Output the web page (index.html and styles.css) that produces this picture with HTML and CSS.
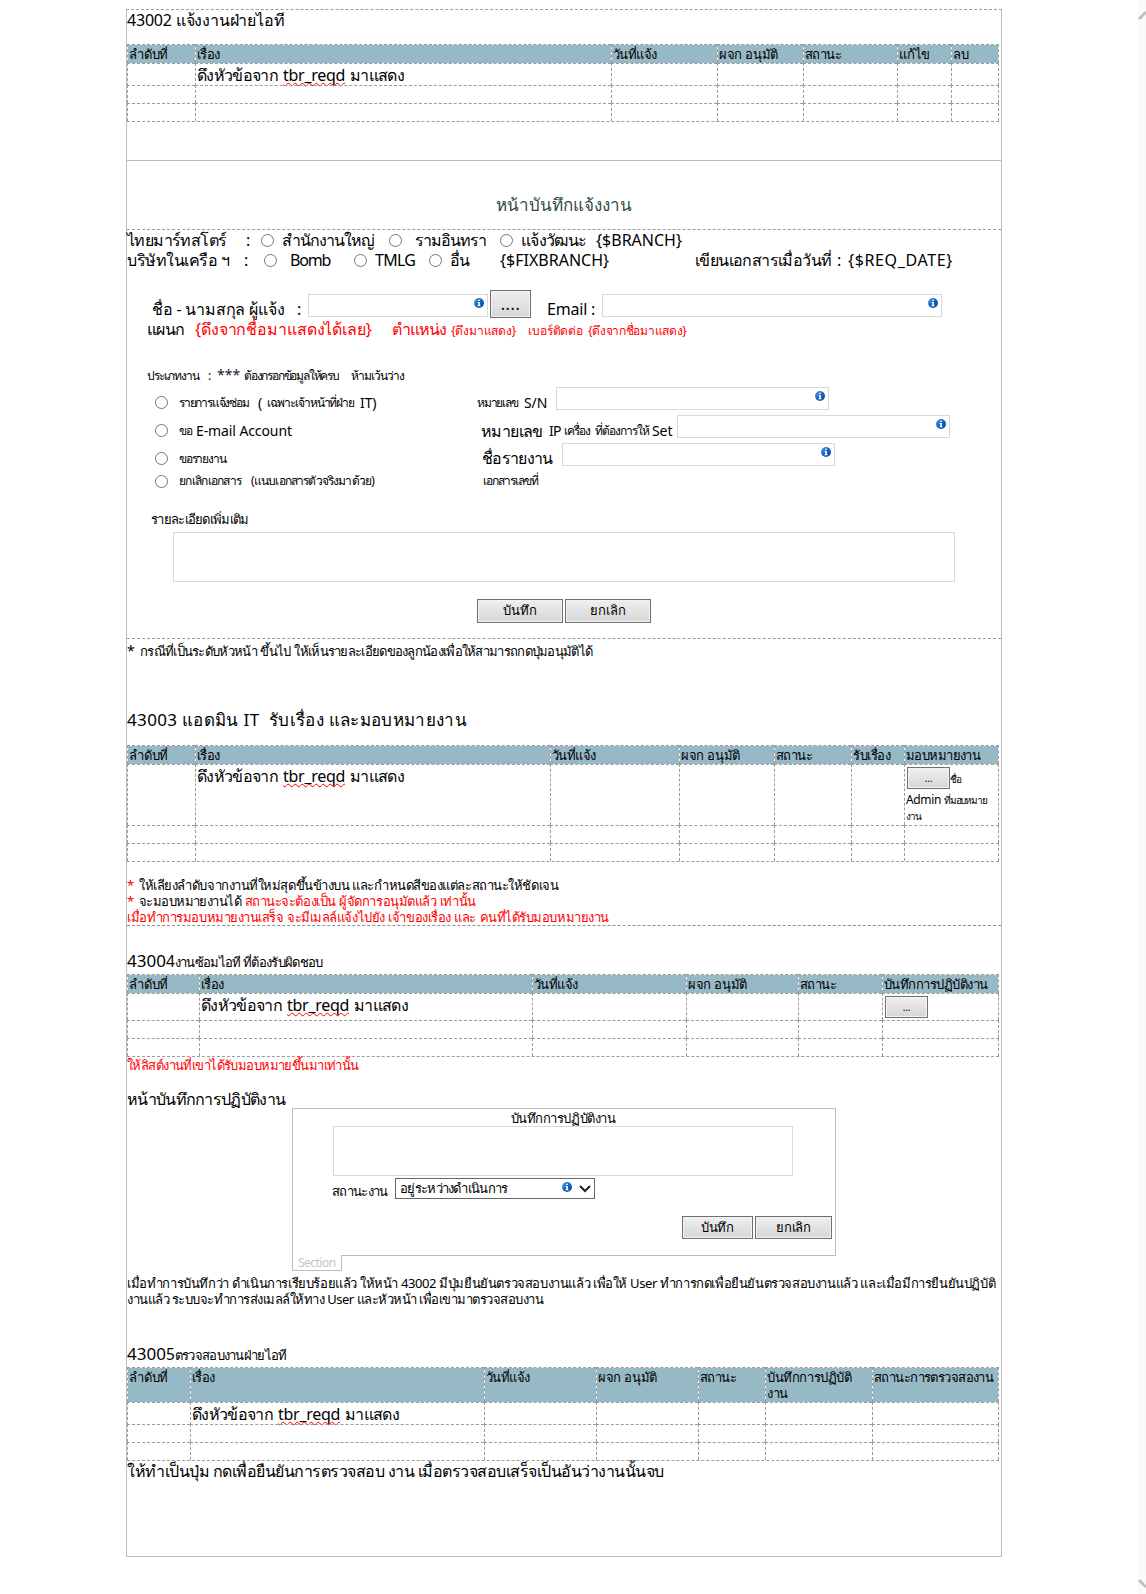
FILE: index.html
```
<!DOCTYPE html>
<html lang="th">
<head>
<meta charset="utf-8">
<title>43002 แจ้งงานฝ่ายไอที</title>
<link rel="stylesheet" href="styles.css">
</head>
<body>
<svg class="defs" width="0" height="0" aria-hidden="true">
  <defs>
    <linearGradient id="info-blue" x1="0" y1="0" x2="1" y2="1">
      <stop offset="0" stop-color="#5aa7ee"/>
      <stop offset="0.45" stop-color="#1668c8"/>
      <stop offset="1" stop-color="#0a3f94"/>
    </linearGradient>
    <symbol id="info" viewBox="0 0 10 10">
      <circle cx="5" cy="5" r="5" fill="url(#info-blue)"/>
      <path d="M4.2 1.7h1.7v1.4H4.2zM3.6 4h2.3v3.2h.7v1H3.5v-1h.8V5h-.7z" fill="#fff"/>
    </symbol>
  </defs>
</svg>
<div class="page">
<main class="sheet">

  <section class="list">
    <h2 class="title t16 k2">43002 แจ้งงานฝ่ายไอที</h2>
    <div class="table cols-request">
      <div class="row head"><span class="k2">ลำดับที่</span><span>เรื่อง</span><span>วันที่แจ้ง</span><span class="k3">ผจก อนุมัติ</span><span>สถานะ</span><span class="k2">แก้ไข</span><span class="k0">ลบ</span></div>
      <div class="row first"><span></span><span class="topic">ดึงหัวข้อจาก <u>tbr_reqd</u> มาแสดง</span><span></span><span></span><span></span><span></span><span></span></div>
      <div class="row"><span></span><span></span><span></span><span></span><span></span><span></span><span></span></div>
      <div class="row"><span></span><span></span><span></span><span></span><span></span><span></span><span></span></div>
    </div>
  </section>

  <section class="form">
    <h1 class="form-title">หน้าบันทึกแจ้งงาน</h1>
    <div class="line l-branch t16">
      <span>ไทยมาร์ทสโตร์</span><span>:</span><i class="radio"></i><span class="k10">สำนักงานใหญ่</span><i class="radio"></i><span class="k10">รามอินทรา</span><i class="radio"></i><span class="k7">แจ้งวัฒนะ</span><span class="k0">{$BRANCH}</span>
    </div>
    <div class="line l-company t16">
      <span class="k5">บริษัทในเครือ ฯ</span><span>:</span><i class="radio"></i><span class="k12">Bomb</span><i class="radio"></i><span class="k7">TMLG</span><i class="radio"></i><span>อื่น</span><span class="k0">{$FIXBRANCH}</span><span>เขียนเอกสารเมื่อวันที่</span><span>:</span><span class="w6">{$REQ_DATE}</span>
    </div>
    <div class="line l-name t16">
      <span class="k2">ชื่อ - นามสกุล ผู้แจ้ง</span><span>:</span><div class="field"><svg class="info"><use href="#info"/></svg></div><button class="btn dots">....</button><span class="k2">Email :</span><div class="field"><svg class="info"><use href="#info"/></svg></div>
    </div>
    <div class="line l-dept t16">
      <span class="k7">แผนก</span><span class="red k1">{ดึงจากชื่อมาแสดงได้เลย}</span><span class="red k10">ตำแหน่ง</span><span class="red t12 k2">{ดึงมาแสดง}</span><span class="red t12 k1">เบอร์ติดต่อ</span><span class="red t12 k3">{ดึงจากชื่อมาแสดง}</span>
    </div>
    <div class="line l-type narrow">
      <span>ประเภทงาน</span><span>:</span><span class="stars">***</span><span class="k12">ต้องกรอกข้อมูลให้ครบ</span><span>ห้ามเว้นว่าง</span>
    </div>
    <div class="line l-repair narrow">
      <i class="radio"></i><span class="k12">รายการแจ้งซ่อม</span><span class="t14">(</span><span>เฉพาะเจ้าหน้าที่ฝ่าย</span><span class="t14">IT)</span><span class="k12">หมายเลข</span><span class="t14">S/N</span><div class="field"><svg class="info"><use href="#info"/></svg></div>
    </div>
    <div class="line l-email narrow">
      <i class="radio"></i><span>ขอ</span><span class="t14">E-mail Account</span><span class="t16">หมายเลข</span><span class="t14 k7">IP</span><span>เครื่อง</span><span>ที่ต้องการให้</span><span class="t14">Set</span><div class="field"><svg class="info"><use href="#info"/></svg></div>
    </div>
    <div class="line l-report narrow">
      <i class="radio"></i><span class="k12">ขอรายงาน</span><span class="t16 k7">ชื่อรายงาน</span><div class="field"><svg class="info"><use href="#info"/></svg></div>
    </div>
    <div class="line l-cancel narrow">
      <i class="radio"></i><span class="k7">ยกเลิกเอกสาร</span><span class="k8">(แนบเอกสารตัวจริงมาด้วย)</span><span>เอกสารเลขที่</span>
    </div>
    <div class="detail-label t13 k7">รายละเอียดเพิ่มเติม</div>
    <div class="area detail"></div>
    <div class="actions">
      <button class="btn">บันทึก</button><button class="btn">ยกเลิก</button>
    </div>
  </section>

  <section class="assign">
    <p class="hint t13"><span class="t14">*</span><span class="k7">กรณีที่เป็นระดับหัวหน้า ขึ้นไป ให้เห็นรายละเอียดของลูกน้องเพื่อให้สามารถกดปุ่มอนุมัติได้</span></p>
    <h2 class="title big">43003 แอดมิน IT&nbsp; รับเรื่อง และมอบหมายงาน</h2>
    <div class="table cols-assign">
      <div class="row head"><span class="k2">ลำดับที่</span><span>เรื่อง</span><span>วันที่แจ้ง</span><span class="k3">ผจก อนุมัติ</span><span>สถานะ</span><span class="k4">รับเรื่อง</span><span class="k6">มอบหมายงาน</span></div>
      <div class="row first"><span></span><span class="topic">ดึงหัวข้อจาก <u>tbr_reqd</u> มาแสดง</span><span></span><span></span><span></span><span></span><span class="assignee"><button class="btn more">...</button><small>ชื่อ</small><br><b>Admin</b> <small>ที่มอบหมาย</small><br><small>งาน</small></span></div>
      <div class="row"><span></span><span></span><span></span><span></span><span></span><span></span><span></span></div>
      <div class="row"><span></span><span></span><span></span><span></span><span></span><span></span><span></span></div>
    </div>
    <div class="notes t13">
      <p><span class="red star">*</span>ให้เลียงลำดับจากงานที่ใหม่สุดขึ้นข้างบน และกำหนดสีของแต่ละสถานะให้ชัดเจน</p>
      <p><span class="red star">*</span><span class="k6">จะมอบหมายงานได้</span> <span class="red">สถานะจะต้องเป็น ผู้จัดการอนุมัตแล้ว เท่านั้น</span></p>
      <p class="red">เมื่อทำการมอบหมายงานเสร็จ จะมีเมลล์แจ้งไปยัง เจ้าของเรื่อง และ คนที่ได้รับมอบหมายงาน</p>
    </div>
  </section>

  <section class="work">
    <h2 class="title mixed"><span class="t17">4300</span><span class="t15">4</span><span class="t13 k7">งานซ้อมไอที ที่ต้องรับผิดชอบ</span></h2>
    <div class="table cols-work">
      <div class="row head"><span class="k2">ลำดับที่</span><span>เรื่อง</span><span>วันที่แจ้ง</span><span class="k3">ผจก อนุมัติ</span><span>สถานะ</span><span>บันทึกการปฏิบัติงาน</span></div>
      <div class="row first"><span></span><span class="topic">ดึงหัวข้อจาก <u>tbr_reqd</u> มาแสดง</span><span></span><span></span><span></span><span class="assignee"><button class="btn more">...</button></span></div>
      <div class="row"><span></span><span></span><span></span><span></span><span></span><span></span></div>
      <div class="row"><span></span><span></span><span></span><span></span><span></span><span></span></div>
    </div>
    <p class="only red t13 k6">ให้ลิสต์งานที่เขาได้รับมอบหมายขึ้นมาเท่านั้น</p>
    <h3 class="subtitle t16 k7">หน้าบันทึกการปฏิบัติงาน</h3>
    <div class="panel">
      <div class="panel-title t13">บันทึกการปฏิบัติงาน</div>
      <div class="area log"></div>
      <div class="status t13"><span class="status-label k7">สถานะงาน</span><div class="select"><span class="k7">อยู่ระหว่างดำเนินการ</span><svg class="info"><use href="#info"/></svg><svg class="chevron" viewBox="0 0 12 8"><path d="M1 1l5 5 5-5" fill="none" stroke="#222" stroke-width="2"/></svg></div></div>
      <div class="actions"><button class="btn save">บันทึก</button><button class="btn cancel">ยกเลิก</button></div>
      <div class="tab">Section</div>
    </div>
    <p class="after t13"><span class="k4">เมื่อทำการบันทึกว่า ดำเนินการเรียบร้อยแล้ว ให้หน้า 43002 มีปุ่มยืนยันตรวจสอบงานแล้ว เพื่อให้ User ทำการกดเพื่อยืนยันตรวจสอบงานแล้ว และเมื่อมีการยืนยันปฏิบัติ</span><br><span class="k5">งานแล้ว ระบบจะทำการส่งเมลล์ให้ทาง User และหัวหน้า เพื่อเขามาตรวจสอบงาน</span></p>
  </section>

  <section class="check">
    <h2 class="title mixed"><span class="t17">4300</span><span class="t15">5</span><span class="t13 k7">ตรวจสอบงานฝ่ายไอที</span></h2>
    <div class="table cols-check">
      <div class="row head"><span class="k2">ลำดับที่</span><span>เรื่อง</span><span>วันที่แจ้ง</span><span class="k3">ผจก อนุมัติ</span><span>สถานะ</span><span class="k4">บันทึกการปฏิบัติ<br>งาน</span><span class="k6">สถานะการตรวจสองาน</span></div>
      <div class="row first"><span></span><span class="topic">ดึงหัวข้อจาก <u>tbr_reqd</u> มาแสดง</span><span></span><span></span><span></span><span></span><span></span></div>
      <div class="row"><span></span><span></span><span></span><span></span><span></span><span></span><span></span></div>
      <div class="row"><span></span><span></span><span></span><span></span><span></span><span></span><span></span></div>
    </div>
    <p class="final t16 k5">ให้ทำเป็นปุ่ม กดเพื่อยืนยันการตรวจสอบ งาน เมื่อตรวจสอบเสร็จเป็นอันว่างานนั้นจบ</p>
  </section>
</main>
<aside class="scrollbar">
  <svg width="8" height="12" viewBox="0 0 8 12"><path d="M1 9l7-7" stroke="#c0c0c0" stroke-width="3"/></svg>
  <svg width="8" height="12" viewBox="0 0 8 12"><path d="M1 2l7 7" stroke="#c0c0c0" stroke-width="3"/></svg>
</aside>
</div>
</body>
</html>
```
FILE: styles.css
```
* { box-sizing: border-box; }
body { margin: 0; background: #fff; color: #000; font-family: "Noto Sans", sans-serif; overflow: hidden; }
h1, h2, h3, p { margin: 0; font-weight: normal; }
.defs { display: block; }
.page { display: flex; justify-content: space-between; height: 1594px; }

.sheet { margin: 9px 0 0 126px; width: 876px; height: 1548px; border: 1px solid #bdbdbd; border-top: 1px dashed #9c9c9c; white-space: nowrap; }
.scrollbar { width: 8px; background: #f9f9f9; display: flex; flex-direction: column; justify-content: space-between; padding: 10px 0 4px; }

/* type sizes and tracking */
.t12 { font-size: 12px; }
.t13 { font-size: 13px; letter-spacing: -.45px; }
.t14 { font-size: 14px; letter-spacing: -.1px; }
.t15 { font-size: 15.5px; letter-spacing: 0; }
.t16 { font-size: 16px; letter-spacing: -.6px; }
.t17 { font-size: 17px; letter-spacing: 0; }
.narrow { font-size: 12px; letter-spacing: -1.05px; }
.k0 { letter-spacing: 0; }
.k1 { letter-spacing: -.12px; }
.k2 { letter-spacing: -.2px; }
.k3 { letter-spacing: -.3px; }
.k4 { letter-spacing: -.4px; }
.k5 { letter-spacing: -.5px; }
.k6 { letter-spacing: -.57px; }
.k7 { letter-spacing: -.7px; }
.k8 { letter-spacing: -.82px; }
.k10 { letter-spacing: -1px; }
.k12 { letter-spacing: -1.2px; }
.w6 { letter-spacing: .63px; }
.red { color: #f00; }

/* tables */
.title { height: 22px; line-height: 22px; }
.list .title { height: 21px; line-height: 20px; margin-bottom: 13px; }
.table { width: 872px; border-bottom: 1px dashed #9c9c9c; }
.row { display: grid; height: 18px; }
.row > span { border-left: 1px dashed #9c9c9c; border-top: 1px dashed #9c9c9c; padding-left: 1px; }
.row > span:last-child { border-right: 1px dashed #9c9c9c; }
.head { height: 19px; font-size: 13px; line-height: 18px; letter-spacing: -.52px; }
.head > span { background: #97b9c6; background-clip: padding-box; }
.first { height: 22px; }
.topic { font-size: 16px; line-height: 22px; letter-spacing: -.67px; word-spacing: 1.6px; }
.topic u { letter-spacing: -.29px; text-decoration: underline wavy #f00 1px; text-underline-offset: 1px; text-decoration-skip-ink: none; }
.cols-request .row { grid-template-columns: 68px 416px 106px 86px 94px 54px 48px; }
.cols-assign .row { grid-template-columns: 68px 355px 129px 95px 77px 53px 95px; }
.cols-work .row { grid-template-columns: 72px 333px 154px 112px 84px 117px; }
.cols-check .row { grid-template-columns: 63px 294px 112px 102px 67px 107px 127px; }
.cols-assign .first { height: 61px; }
.cols-work .first { height: 27px; }
.cols-check .head { height: 35px; line-height: 16px; }
.cols-check .head > span { padding-top: 1px; }

/* controls */
.btn { height: 24px; padding: 0 0 1px; border: 1px solid #707070; border-radius: 0; background: linear-gradient(#efefef, #d6d6d6); box-shadow: inset 0 0 0 1px #f3f3f3; font: 13px "Noto Sans", sans-serif; letter-spacing: -.2px; color: #000; width: 86px; }
.btn.more { width: 43px; height: 22px; font-size: 10px; vertical-align: top; padding: 0; }
.btn.dots { width: 41px; height: 28px; font-size: 16px; letter-spacing: .6px; }
.field { height: 23px; border: 1px solid #d9d9d9; padding: 3px 3px; display: flex; justify-content: flex-end; }
.area { border: 1px solid #d9d9d9; height: 50px; }
.info { width: 10px; height: 10px; display: block; }
.radio { width: 13px; height: 13px; border: 1px solid #757575; border-radius: 50%; background: #fff; align-self: center; }

/* request form */
.form { margin-top: 38px; border-top: 1px solid #bdbdbd; border-bottom: 1px dashed #999; }
.form-title { height: 69px; padding-top: 33px; line-height: 22px; text-align: center; font-size: 17px; color: #2f4a44; border-bottom: 1px dashed #9c9c9c; }
.line { display: grid; height: 20px; line-height: 20px; align-items: baseline; }
.l-branch { grid-template-columns: 119px 15px 21px 107px 26px 85px 21px 75px auto; }
.l-company { grid-template-columns: 117px 20px 26px 64px 21px 54px 21px 50px 195px 142px 11px auto; }
.l-name { margin-top: 20px; height: 28px; padding-left: 25px; grid-template-columns: 145px 11px 182px 57px 55px 340px; align-items: start; }
.l-name > span { line-height: 38px; }
.l-name .field { margin-top: 4px; }
.l-name .field:nth-child(3) { width: 180px; }
.l-dept { margin-top: 1px; height: 21px; padding-left: 20px; grid-template-columns: 48px 197px 59px 77px 60px auto; }
.l-type { margin-top: 25px; height: 21px; padding-left: 20px; grid-template-columns: 61px 9px 27px 107px auto; }
.stars { font-size: 14px; letter-spacing: 0; color: #123; }
.l-repair, .l-email, .l-report, .l-cancel { padding-left: 28px; }
.l-repair, .l-email, .l-report { height: 24px; line-height: 31px; margin-top: 4px; align-items: start; }
.l-repair > .radio, .l-email > .radio, .l-report > .radio { align-self: start; margin-top: 9px; }
.l-repair { margin-top: 1px; grid-template-columns: 24px 79px 9px 93px 117px 47px 32px 273px; }
.l-email { grid-template-columns: 24px 17px 285px 68px 15px 31px 57px 25px 273px; }
.l-repair > span, .l-email > span { line-height: 32px; }
.l-report { grid-template-columns: 24px 303px 80px 273px; }
.l-cancel { margin-top: 4px; grid-template-columns: 24px 72px 232px auto; }
.detail-label { margin-top: 18px; height: 21px; line-height: 20px; padding-left: 24px; }
.detail { margin: 2px 0 0 46px; width: 782px; }
.actions { display: flex; gap: 2px; }
.form .actions { margin: 17px 0 15px 350px; }

/* assignment */
.hint { height: 24px; line-height: 24px; display: grid; grid-template-columns: 13px auto; align-items: baseline; word-spacing: 1px; }
.big { margin: 46px 0 14px; font-size: 17px; letter-spacing: .34px; }
.assignee { font-size: 12px; letter-spacing: -.36px; line-height: 16px; padding-top: 2px; }
.assignee .btn { margin-left: 1px; }
.assignee small { font-size: 10px; letter-spacing: -1.1px; display: inline-block; }
.assignee .btn + small { line-height: 25px; padding-bottom: 0; }
.assignee b { font-weight: normal; }
.notes { margin-top: 15px; height: 49px; line-height: 16px; border-bottom: 1px dashed #8f8f8f; }
.star { display: inline-block; width: 12px; font-size: 13px; line-height: 14px; }
.notes p:not(:first-child) { word-spacing: .6px; }

/* work log */
.mixed { margin: 21px 0 5px; }
.only { height: 18px; line-height: 17px; }
.subtitle { margin-top: 15px; height: 18px; line-height: 19px; }
.panel { position: relative; margin-left: 165px; width: 544px; height: 148px; border: 1px solid #bdbdbd; }
.panel-title { height: 17px; line-height: 18px; text-align: center; padding-right: 2px; }
.log { margin-left: 40px; width: 460px; }
.status { display: flex; margin: 2px 0 0 39px; }
.status-label { width: 63px; line-height: 27px; }
.select { width: 200px; height: 21px; border: 1px solid #666; display: flex; align-items: flex-start; padding-left: 4px; line-height: 18px; }
.select span { width: 162px; }
.select .info { margin-top: 3px; }
.chevron { width: 12px; height: 8px; margin: 6px 0 0 7px; }
.panel .actions { margin-top: 11px; justify-content: flex-end; padding-right: 3px; }
.panel .btn { height: 23px; }
.panel .save { width: 71px; }
.panel .cancel { width: 77px; }
.tab { position: absolute; left: -1px; top: 146px; width: 50px; height: 16px; border: 1px solid #bdbdbd; border-top: 0; background: #fff; color: #c4c4c4; font-size: 12px; line-height: 15px; letter-spacing: -.5px; padding-left: 5px; }
.after { margin-top: 19px; line-height: 16px; }

/* verification */
.check .mixed { margin-top: 33px; }
.final { height: 22px; line-height: 21px; }
```
